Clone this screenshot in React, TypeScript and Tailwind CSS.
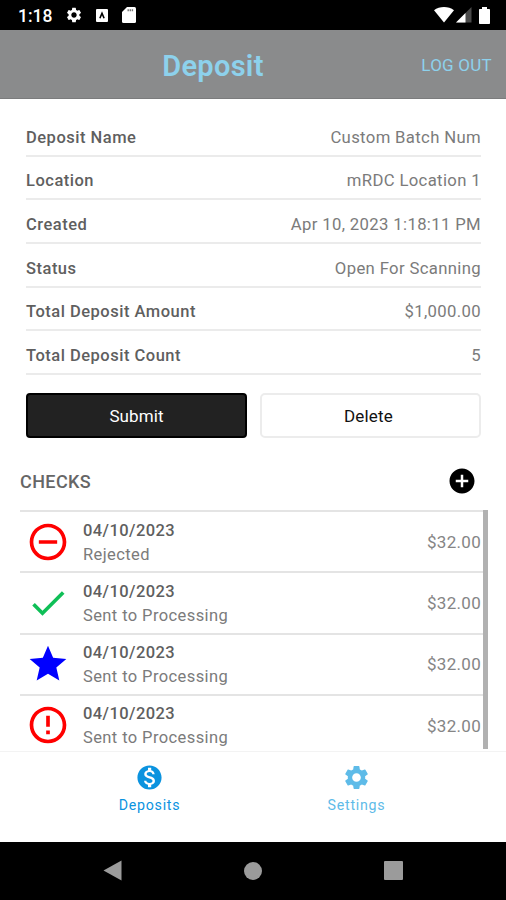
import React from 'react';
import type { IconType } from 'react-icons';
import {
  MdAddCircle,
  MdCheck,
  MdErrorOutline,
  MdMonetizationOn,
  MdRemoveCircleOutline,
  MdSettings,
  MdStar,
} from 'react-icons/md';

interface DetailType {
  label: string;
  value: string;
}

interface CheckType {
  id: number;
  date: string;
  status: string;
  amount: string;
  icon: IconType;
  color: string;
}

const details: DetailType[] = [
  { label: 'Deposit Name', value: 'Custom Batch Num' },
  { label: 'Location', value: 'mRDC Location 1' },
  { label: 'Created', value: 'Apr 10, 2023 1:18:11 PM' },
  { label: 'Status', value: 'Open For Scanning' },
  { label: 'Total Deposit Amount', value: '$1,000.00' },
  { label: 'Total Deposit Count', value: '5' },
];

const checks: CheckType[] = [
  { id: 1, date: '04/10/2023', status: 'Rejected', amount: '$32.00', icon: MdRemoveCircleOutline, color: 'text-[#ff0000]' },
  { id: 2, date: '04/10/2023', status: 'Sent to Processing', amount: '$32.00', icon: MdCheck, color: 'text-[#0fbf57]' },
  { id: 3, date: '04/10/2023', status: 'Sent to Processing', amount: '$32.00', icon: MdStar, color: 'text-[#0000ff]' },
  { id: 4, date: '04/10/2023', status: 'Sent to Processing', amount: '$32.00', icon: MdErrorOutline, color: 'text-[#ff0000]' },
];

const StatusBar = () => (
  <div className="flex h-[30px] shrink-0 items-center bg-black pl-[18px] pr-[16px] text-white">
    <span className="w-[47px] pt-[2px] text-[17.5px] font-medium">1:18</span>
    <MdSettings className="size-[18px]" />
    <svg viewBox="0 0 12 13" className="ml-[12.5px] h-[13px] w-[12px]">
      <rect width="12" height="13" rx="1" fill="currentColor" />
      <path d="M3.9 9.2 6 4.3l2.1 4.9" fill="none" stroke="#000" strokeWidth="1.6" />
    </svg>
    <svg viewBox="0 0 14 16" className="ml-[14px] h-[16px] w-[14px]">
      <path d="M5 0h7.5Q14 0 14 1.5v13q0 1.5-1.5 1.5h-11Q0 16 0 14.5V5z" fill="currentColor" />
      <path d="M5.5 3.2h6" stroke="#777" strokeWidth="2" strokeDasharray="1.4 .7" />
    </svg>
    <div className="ml-auto flex items-center">
      <svg viewBox="0 0 20 16" className="h-[16px] w-[20px]">
        <path d="M0 3.2C5.5-1 14.5-1 20 3.2L10 15.4z" fill="currentColor" />
      </svg>
      <svg viewBox="0 0 16 16" className="ml-[2px] h-[16px] w-[16px]">
        <path d="M15.5 0v15.5H0z" fill="#4a4a4a" />
        <path d="M9.5 6v9.5H0z" fill="currentColor" />
      </svg>
      <svg viewBox="0 0 11 17" className="ml-[7px] h-[17px] w-[11px]">
        <path d="M3 0h5v2h2.2q.8 0 .8.8v13.4q0 .8-.8.8H.8q-.8 0-.8-.8V2.8Q0 2 .8 2H3z" fill="currentColor" />
      </svg>
    </div>
  </div>
);

const Header = () => (
  <header className="grid h-[69px] shrink-0 grid-cols-[1fr_auto_1fr] items-center border-b border-[#7b7c7d] bg-[#8a8b8c] pl-[6px] pt-[4px] text-[#8dd1ec]">
    <div className="w-full" />
    <h1 className="mr-[86px] pt-[2px] text-[29px] font-semibold tracking-[0.3px]">Deposit</h1>
    <button className="justify-self-end pr-[14px] text-[17px] tracking-[0.25px]">LOG OUT</button>
  </header>
);

const DetailRow = (props: DetailType) => {
  const { label, value } = props;

  return (
    <div className="flex h-[43.6px] items-end justify-between border-b-2 border-[#ebebeb] pb-[6px] text-[16.5px] leading-[22px]">
      <span className="font-medium tracking-[0.5px] text-[#5f5f5f]">{label}</span>
      <span className="text-[16.7px] tracking-[0.35px] text-[#7b7b7b]">{value}</span>
    </div>
  );
};

const CheckRow = (props: { check: CheckType }) => {
  const { check } = props;
  const Icon = check.icon;

  return (
    <div className="flex h-[61.3px] shrink-0 items-center border-t-2 border-[#e4e4e4] pl-[6px] pr-[7px]">
      <Icon className={`size-[44px] ${check.color}`} />
      <div className="ml-[13px] flex flex-col pt-[2px] text-[16.5px] leading-[24px]">
        <span className="font-medium tracking-[0.42px] text-[#5f5f5f]">{check.date}</span>
        <span className="tracking-[0.4px] text-[#7b7b7b]">{check.status}</span>
      </div>
      <span className="ml-auto pt-[2px] text-[17px] tracking-[0.3px] text-[#858585]">{check.amount}</span>
    </div>
  );
};

const App = () => {
  return (
    <div className="flex h-[900px] w-[506px] flex-col overflow-hidden bg-white font-[Roboto,sans-serif]">
      <StatusBar />
      <Header />

      <section className="flex flex-col pl-[26px] pr-[25px] pt-[14.3px]">
        {details.map((detail) => (
          <DetailRow key={detail.label} label={detail.label} value={detail.value} />
        ))}
        <div className="mt-[18.1px] grid grid-cols-2 gap-[13px] text-[17px]">
          <button className="h-[45px] rounded-[4px] border-2 border-black bg-[#222222] pt-[2px] tracking-[0.1px] text-white">
            Submit
          </button>
          <button className="h-[45px] rounded-[5px] border-2 border-[#ececec] bg-white pr-[4px] pt-[2px] tracking-[0.2px] text-[#111111]">
            Delete
          </button>
        </div>
      </section>

      <div className="flex h-[72px] shrink-0 items-center justify-between pl-[20px] pr-[29px] pt-[14px]">
        <h2 className="pt-[2px] text-[18px] font-medium tracking-[0.4px] text-[#666666]">CHECKS</h2>
        <MdAddCircle className="size-[30px] text-black" />
      </div>

      <div className="relative ml-[20px] mr-[18px] flex h-[241px] shrink-0 flex-col overflow-hidden">
        {checks.map((check) => (
          <CheckRow key={check.id} check={check} />
        ))}
        {/* scroll thumb */}
        <div className="absolute right-0 top-0 h-[239px] w-[5px] bg-[#b1b1b1]" />
      </div>

      <nav className="grid h-[91px] shrink-0 grid-cols-2 border-t border-[#f3f3f3] px-[46px] pt-[11px] text-[14.2px] tracking-[0.75px]">
        <div className="flex flex-col items-center text-[#0b93df]">
          <MdMonetizationOn className="size-[29px]" />
          <span className="leading-[26px]">Deposits</span>
        </div>
        <div className="flex flex-col items-center text-[#5ebbe8]">
          <MdSettings className="size-[29px]" />
          <span className="leading-[26px]">Settings</span>
        </div>
      </nav>

      <div className="flex flex-1 items-center bg-black pl-[103px] text-[#9b9b9b]">
        <svg viewBox="0 0 19 21" className="h-[21px] w-[19px]">
          <path d="M18.5.5v20L.5 10.5z" fill="currentColor" />
        </svg>
        <div className="ml-[122px] size-[18px] rounded-full bg-[#9b9b9b]" />
        <div className="ml-[121.5px] size-[19px] rounded-[1px] bg-[#9b9b9b]" />
      </div>
    </div>
  );
};

export default App;
